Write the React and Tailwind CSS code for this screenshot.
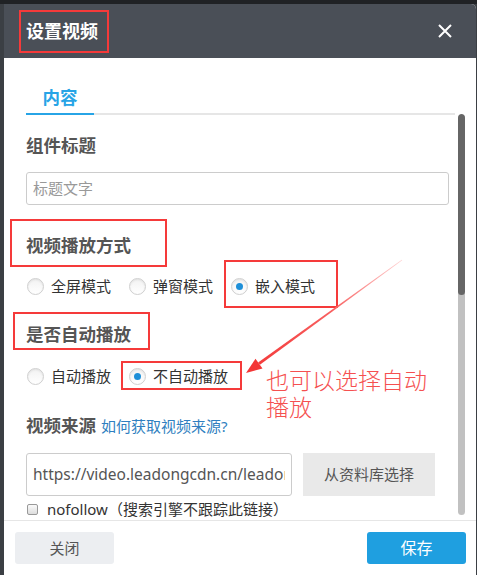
import React from "react";

const font = "font-['Noto_Sans','Noto_Sans_CJK_SC',sans-serif]";

const Radio = ({ checked, label }) => (
  <label className="flex items-center gap-[7px] text-[15px] leading-5 text-[#333]">
    <span className="flex h-[17px] w-[17px] items-center justify-center rounded-full border border-[#cfcfcf] bg-gradient-to-b from-[#f2f2f2] to-white shadow-[inset_0_1px_2px_rgba(0,0,0,0.08)]">
      {checked && <span className="h-[7px] w-[7px] rounded-full bg-[#1e8fd8]" />}
    </span>
    {label}
  </label>
);

const RedBox = ({ className }) => (
  <div className={"pointer-events-none absolute border-2 border-[#f53a3a] " + className} />
);

const Arrow = () => (
  <svg className="pointer-events-none absolute left-0 top-0" width="477" height="575">
    <defs>
      <linearGradient id="ar" x1="402" y1="260" x2="246" y2="373" gradientUnits="userSpaceOnUse">
        <stop offset="0" stopColor="#ffd0d0" />
        <stop offset="0.45" stopColor="#f86060" />
        <stop offset="1" stopColor="#f33636" />
      </linearGradient>
    </defs>
    <polygon
      points="402.2,260.2 401.8,259.8 258.1,362.4 259.9,364.8"
      fill="url(#ar)"
    />
    <polygon points="246,373 255.5,358.7 262.5,368.5" fill="#f33636" />
  </svg>
);

export default function App() {
  return (
    <div className={"relative h-[575px] w-[477px] overflow-hidden bg-[#3b3f44] " + font}>
      <div className="h-1 bg-[#202225]" />
      <div className="ml-1 w-[472px] overflow-hidden rounded-tr-[5px] bg-white">
        {/* header */}
        <div className="flex h-[54px] items-center justify-between bg-[#4a4f57] pl-[22px] pr-[24px]">
          <h2 className="text-[18px] font-bold text-white">设置视频</h2>
          <svg width="14" height="14" viewBox="0 0 14 14">
            <path d="M1 1L13 13M13 1L1 13" stroke="#fff" strokeWidth="2" />
          </svg>
        </div>

        {/* body */}
        <div className="flex h-[462px] overflow-hidden pl-[22px] pr-[10px]">
          <div className="w-[429px] shrink-0">
            <div className="flex border-b-2 border-[#e6e6e6] pt-[29px]">
              <div className="-mb-[2px] w-[68px] border-b-2 border-[#27a4e6] pb-[6px] text-center text-[17.5px] font-bold leading-[20px] text-[#27a4e6]">
                内容
              </div>
            </div>

            <div className="mt-[18px] text-[17.5px] font-bold leading-6 text-[#555]">组件标题</div>
            <div className="mt-[15px] flex h-[33px] w-[423px] items-center rounded-[3px] border border-[#ccc] px-[6px] text-[15px] text-[#999]">
              标题文字
            </div>

            <div className="mt-[28px] text-[17.5px] font-bold leading-6 text-[#555]">视频播放方式</div>
            <div className="mt-[19px] flex items-center gap-[18px] pl-px">
              <Radio label="全屏模式" />
              <Radio label="弹窗模式" />
              <Radio label="嵌入模式" checked />
            </div>

            <div className="mt-[26px] text-[17.5px] font-bold leading-6 text-[#555]">是否自动播放</div>
            <div className="mt-[20px] flex items-center gap-[18px] pl-px">
              <Radio label="自动播放" />
              <Radio label="不自动播放" checked />
            </div>

            <div className="mt-[27px] flex items-baseline gap-[5px]">
              <span className="text-[17.5px] font-bold leading-6 text-[#555]">视频来源</span>
              <a className="text-[15px] text-[#2f7fc0]">如何获取视频来源?</a>
            </div>

            <div className="mt-[15px] flex gap-[11px]">
              <div className="h-[43px] w-[266px] overflow-hidden rounded-[3px] border border-[#ccc] px-[6px]">
                <input
                  readOnly
                  value="https://video.leadongcdn.cn/leadong"
                  className="h-full w-full bg-transparent text-[15.5px] text-[#555] outline-none"
                />
              </div>
              <button className="h-[43px] w-[132px] bg-[#e9e9e9] text-[15px] text-[#555]">从资料库选择</button>
            </div>

            <div className="mt-[6px] flex h-4 items-center gap-[9px] pl-px text-[15px] text-[#333]">
              <span className="h-[11px] w-[11px] rounded-[2px] border border-[#999] bg-gradient-to-b from-[#fafafa] to-[#ddd]" />
              <span>nofollow（搜索引擎不跟踪此链接）</span>
            </div>
          </div>

          {/* scrollbar */}
          <div className="ml-[3px] mt-[56px] flex h-[401px] w-[7px] flex-col overflow-hidden rounded-full bg-[#c1c1c1]">
            <div className="h-[181px] rounded-full bg-[#666]" />
          </div>
        </div>

        {/* footer */}
        <div className="flex h-[55px] items-start justify-between border-t border-[#e6e6e6] pl-[11px] pr-[10px] pt-[11px]">
          <button className="h-8 w-[99px] rounded-[3px] bg-[#eceef1] text-[15px] text-[#555]">关闭</button>
          <button className="h-8 w-[99px] rounded-[3px] bg-[#1f9fe0] text-[16px] text-white">保存</button>
        </div>
      </div>

      {/* annotations */}
      <RedBox className="left-[19px] top-[10px] h-[43px] w-[90px]" />
      <RedBox className="left-[10px] top-[219px] h-[48px] w-[157px]" />
      <RedBox className="left-[224px] top-[260px] h-[48px] w-[114px]" />
      <RedBox className="left-[13px] top-[312px] h-[38px] w-[137px]" />
      <RedBox className="left-[121px] top-[361px] h-[29px] w-[121px]" />
      <Arrow />
      <div className="pointer-events-none absolute left-[266px] top-[367px] w-[180px] text-[23px] font-light leading-[27px] text-[#f55050]">
        也可以选择自动播放
      </div>
    </div>
  );
}
